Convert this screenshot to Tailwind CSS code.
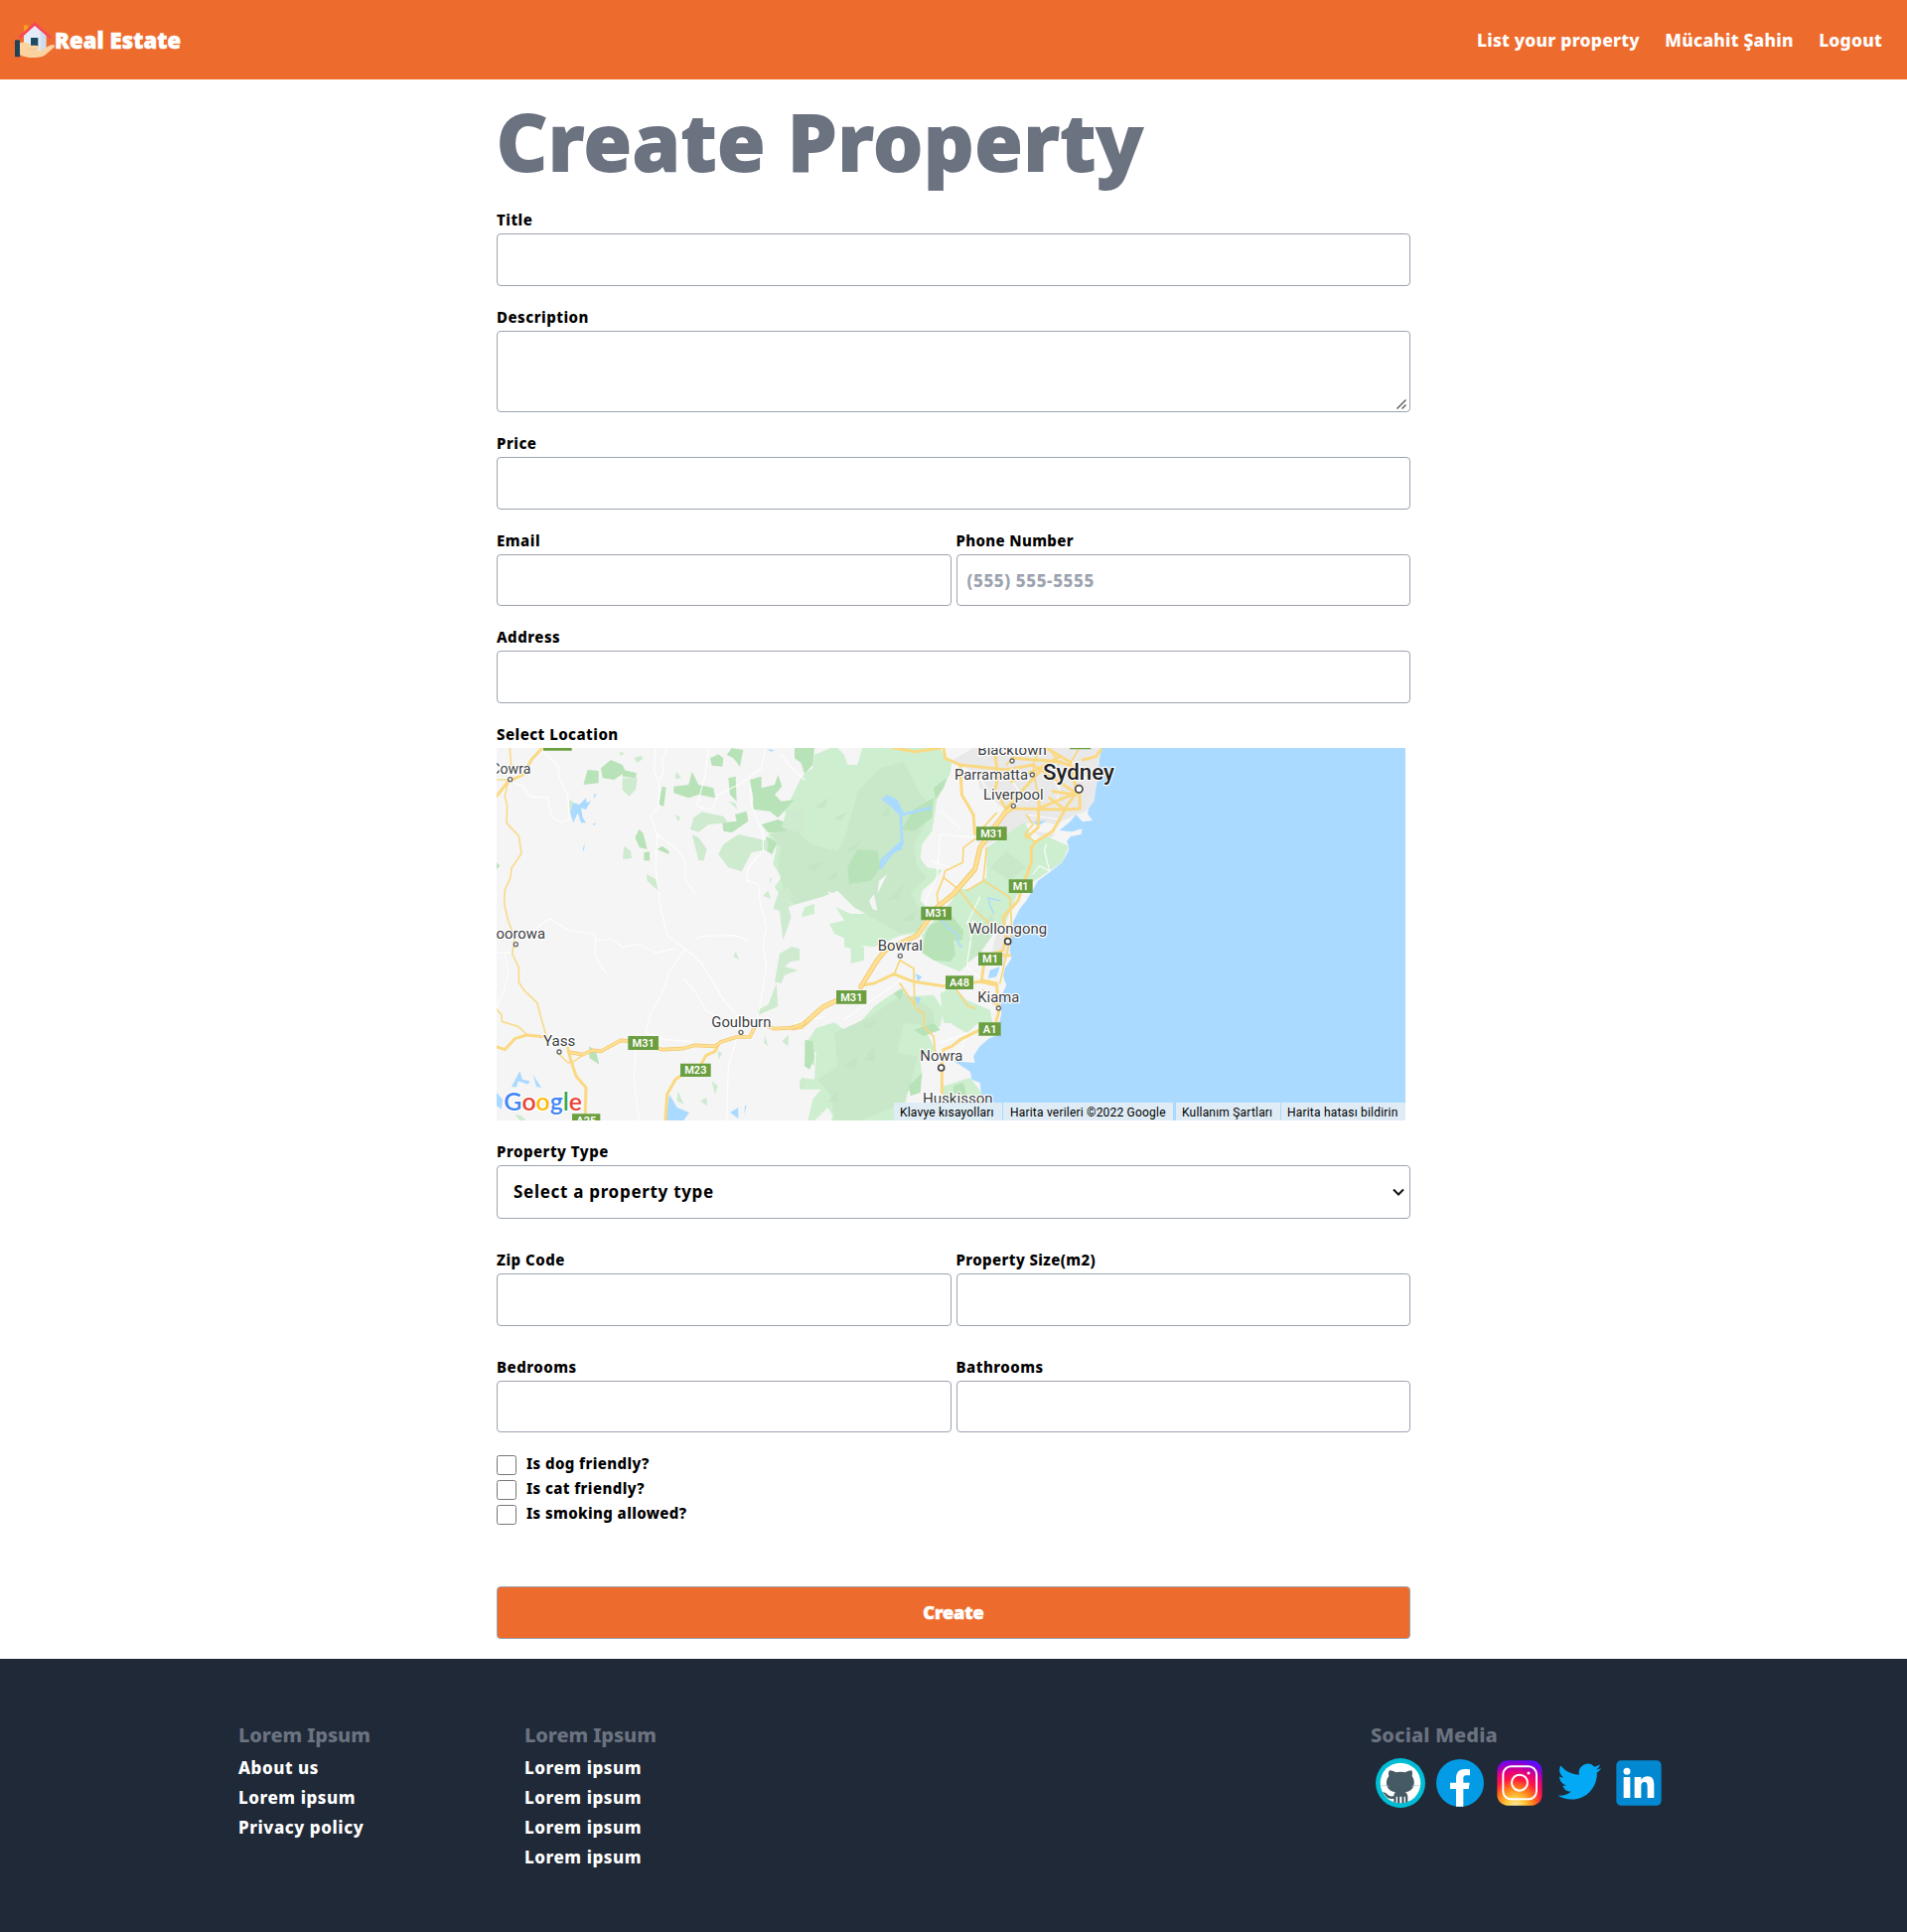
<!DOCTYPE html>
<html lang="en">
<head>
<meta charset="utf-8">
<title>Real Estate - Create Property</title>
<script src="https://cdn.jsdelivr.net/npm/@tailwindcss/browser@4"></script>
</head>
<body class="bg-white text-black font-['Noto_Sans',sans-serif] font-extrabold">

<header class="flex h-20 items-center justify-between bg-[#ed6c2d] pl-[15px] pr-[25px] text-white">
  <a class="flex items-center">
    <svg class="h-[37px] w-10" viewBox="45 65 120 111">
      <rect x="72" y="75" width="13" height="22" fill="#f9a01b"/>
      <path d="M72 106 105 76l34 30v46H72z" fill="#e3edf8"/>
      <path d="M122 90l17 16v46h-17z" fill="#cfdeee"/>
      <path d="M58 113 105 71l48 42" fill="none" stroke="#f8475a" stroke-width="8" stroke-linejoin="round"/>
      <rect x="93" y="113" width="22" height="27" fill="#1f4a63"/>
      <path d="M60 128c14-4 26 0 34 8h16c10 1 10 13 0 14l-16 1h26c10-1 26-13 34-16 8-3 14 1 9 7l-28 24c-7 4-14 5-22 6-18 3-38 1-53-8z" fill="#fbd3a0"/>
      <path d="M85 148h28" stroke="#f0bb80" stroke-width="2"/>
      <rect x="45" y="120" width="15" height="51" rx="2" fill="#1f4257"/>
    </svg>
    <span class="text-[22px] font-black leading-8 tracking-[0.1px] [-webkit-text-stroke:0.6px_#fff]">Real Estate</span>
  </a>
  <nav class="flex gap-[25.5px] pb-px text-[17.5px] leading-6 tracking-[0.22px]">
    <a>List your property</a><a>Mücahit Şahin</a><a>Logout</a>
  </nav>
</header>

<main class="mx-auto w-[920px]">
  <h1 class="h-[129px] pt-[7px] text-[79px] leading-[110px] tracking-[1.1px] text-[#6b7280] [-webkit-text-stroke:2px_#6b7280] [stroke-linejoin:round]">Create Property</h1>

  <form class="text-[15px] leading-6 tracking-[0.5px]">
    <label class="block h-[26px]">Title</label>
    <input class="block h-[53px] w-full rounded border border-[#9ca3af]">

    <label class="mt-[19px] block h-[26px]">Description</label>
    <div class="relative">
      <textarea class="block h-[82px] w-full resize-none rounded border border-[#9ca3af]"></textarea>
      <svg class="absolute bottom-[3px] right-[4px] size-[10px]" viewBox="0 0 10 10" stroke="#555" stroke-width="1.4" fill="none"><path d="M.5 9.500 9.500.5M5.500 9.500 9.500 5.500"/></svg>
    </div>

    <label class="mt-[19px] block h-[26px]">Price</label>
    <input class="block h-[53px] w-full rounded border border-[#9ca3af]">

    <div class="mt-[19px] grid grid-cols-2 gap-[5px]">
      <div><label class="block h-[26px]">Email</label><input class="block h-[52px] w-full rounded border border-[#9ca3af]"></div>
      <div><label class="block h-[26px] tracking-[0.35px]">Phone Number</label><input placeholder="(555) 555-5555" class="block h-[52px] w-full rounded border border-[#9ca3af] px-2.5 text-[17px] tracking-[0.6px] placeholder:text-[#9ca3af]"></div>
    </div>

    <label class="mt-[19px] block h-[26px]">Address</label>
    <input class="block h-[53px] w-full rounded border border-[#9ca3af]">

    <label class="mt-[19px] block h-[26px] tracking-[0.48px]">Select Location</label>
    <div class="relative h-[375px] w-[915px] overflow-hidden">
      <svg class="block h-full w-full font-normal tracking-normal" viewBox="0 0 2745 1125" fill="none" font-family="Roboto, sans-serif" stroke-linejoin="round" stroke-linecap="round">
        <rect width="2745" height="1125" fill="#aadaff"/>

        <!-- mainland, coast and eastern parks -->
        <g transform="translate(900 -39)">
          <path fill="#f5f5f5" d="M-900 39H925L918 100 912 150 905 185 890 215 885 238 900 258 870 262 850 240 832 262 800 288 838 292 868 283 866 300 834 306 822 320 829 338 826 352 808 385 770 415 735 440 718 470 700 500 680 525 662 560 655 600 650 650 655 675 635 705 630 730 640 755 628 780 622 810 625 840 618 870 608 908 588 916 560 940 540 970 545 990 500 990 530 1010 535 1040 560 1050 567 1110V1164H-900z"/>
          <path fill="#e9e9e9" d="M540 39H925L905 200 880 232 850 240 790 270 740 262 690 270 640 300 580 332 545 320 640 225 600 200 560 160 545 110 470 80zM610 600 650 580 650 650 630 700 590 680zM720 290 790 300 760 320z"/>
          <path fill="#ceeed0" d="M110 39H440L455 70 475 85 470 115 430 195 415 290 385 330 380 372 400 400 445 408 420 440 385 470 380 500 400 520 390 595 320 605 240 640 200 635 120 600 105 570 150 560 190 580 220 540 180 520 130 470 80 490 70 480 20 490 0 512-25 522-40 490-60 460-40 430-65 390-55 340-80 300-15 265-30 230 20 130 38 110 55 100 60 60z"/>
          <path fill="#c8e8c9" d="M260 100 330 80 380 180 410 210 390 280 360 330 370 400 400 430 350 480 390 540 380 590 320 600 250 560 180 520 130 470 80 490 0 512-30 480-50 400-40 340-70 300-20 265 50 330 130 350 155 300 175 230 190 170z"/>
          <path fill="#b8e2b8" d="M0 39H60L55 90 30 118 20 85 0 70zM190 345 250 350 260 400 230 440 165 450 160 400zM360 225 420 190 415 250 360 290 325 285zM420 160 460 130 450 160 425 195z"/>
          <path fill="#f5f5f5" d="M130 39 205 39 190 90 160 90 150 60zM225 500 240 480 250 530 235 525zM100 470 150 500 170 540 120 520zM255 440 280 420 250 480z"/>
          <path fill="#ceeed0" d="M580 340 640 300 695 262 720 320 760 305 828 335 808 385 718 445 670 485 640 560 610 590 570 640 500 715 440 690 385 660 385 600 400 580 460 520 500 465 530 465 580 430z"/>
          <path fill="#b8e2b8" d="M395 600 410 575 470 540 510 590 505 640 470 685 420 680 385 655z"/>
          <path fill="#c8e8c9" d="M540 600 600 540 600 600 560 660 520 690 500 640zM590 400 640 350 700 400 650 440z"/>
          <path fill="#ceeed0" d="M65 885 120 868 150 890 200 865 240 820 320 765 345 790 420 785 450 830 440 880 400 900 425 950 380 985 385 1035 340 1080 330 1164H110L115 1150 100 1125 60 1164H40L55 1100 80 1070 15 1070 20 1035 60 1040 65 960 35 930zM440 780 480 760 520 800 590 830 600 875 555 870 520 900 470 870 450 870zM450 1060 530 1035 565 1080 567 1164H440zM-20 790-30 775M30 930 60 920 60 1000 35 980z"/>
          <path fill="#c8e8c9" d="M120 900 230 850 330 780 420 830 420 880 330 870 310 960 370 970 350 1060 330 1110 200 1164H120L110 1090 70 1040 130 1000z"/>
          <path fill="#b8e2b8" d="M345 1060 385 1020 380 1080 350 1090zM360 890 420 870 440 890 390 910zM480 1060 510 1050 520 1090 480 1080zM300 780 330 765 320 800zM32 920 55 925 60 975 45 1010 30 1000z"/>
          <path fill="#ceeed0" d="M30 520 60 510 60 540 20 550zM125 520 170 540 220 540 235 580 180 590 150 560zM150 600 200 610 190 650 150 640zM170 620 210 640 210 680 170 690zM480 620 540 620 520 700 490 700z"/>
          <path fill="#bfe3c1" opacity=".6" d="M120 250l40-18-20 26zM60 220l40-30-8 30zM150 350l50-30-18 28zM30 400l60-20-30 30zM90 440l40-30-6 24zM260 240l30-30-6 36zM280 500l50-50-14 42zM320 560l50-30-14 30zM150 1000l40-30-6 36zM210 980l30-44 4 50zM200 880l50-20-20 28zM100 1110l30-40 2 36z"/>
          <path stroke="#aadaff" stroke-width="8" d="M275 195 320 230 325 330 290 360 262 400M325 240 410 220M290 205 280 190"/><path stroke="#aadaff" stroke-width="5" d="M440 550 460 580 490 600 495 630 505 640"/>
          <path fill="#aadaff" d="M262 195 280 180 310 195 330 235 360 235 320 245 290 215zM320 320 325 345 280 362 255 405 260 375zM590 710 620 700 610 730 585 735zM365 720 385 730 372 745zM362 790 382 795 372 815zM480 985 545 990 535 1020 505 1000zM720 262 760 258 735 275z"/>
          <path stroke="#aadaff" stroke-width="4" d="M620 500 585 492 590 515 602 538"/>
          <!-- minor roads -->
          <g stroke="#fff" stroke-width="3.500" opacity=".85"><path d="M390 600 395 500 430 430 440 300 550 310M440 230 500 280M560 490 520 570M720 420 740 395 770 410 755 350 760 330M410 380 470 400M0 870 90 850M150 860 220 810 320 740M440 930 520 900 500 960M540 560 520 700 570 740M560 130 610 210M760 100 800 160 790 210M700 240 800 255M840 80 880 130M650 130 700 200"/></g>
          <!-- highways -->
          <g stroke="#f9d67a" stroke-width="5">
            <path d="M550 310 510 340 508 385 455 410 450 430 500 470 545 530 590 570M450 430 430 480 435 520M520 470 570 440 650 490 655 560M580 340 570 440M318 680 300 725M318 680 360 705 362 810M318 750 372 830 390 840 390 880 420 910 425 960M490 770 525 820 545 825M570 770 600 810 620 820M655 560 655 600 620 750M560 290 610 235M700 240 720 270 695 300 730 325M610 39V110M680 39 640 90M770 39 800 90M740 39 720 90 740 220M860 39 830 90 850 150"/>
          </g>
          <g stroke="#fad982" stroke-width="9">
            <path d="M300 39 365 50 440 39M450 39 455 70 500 90 640 105 720 90 850 175 815 225 660 222M500 90 505 180 540 240 545 300M605 60 615 120 605 170 640 225M660 70 800 80 850 100M655 140 740 100 800 65M860 170 862 222 820 225M760 39 830 80 850 160M870 75 910 65 925 45M715 340 725 325 780 290 820 220M740 170 735 280 700 310M770 190 810 220M640 220 740 110M740 220 850 175M780 170 850 180"/>
            <path d="M715 340 715 385 695 440 675 500 630 550 640 600 630 650 575 670 565 740 610 750 618 830 608 870 550 895 500 920 475 940 450 950 445 1000 445 1080"/>
            <path d="M205 755 240 750 300 722 360 745 450 758 560 745 610 755M605 665 650 665"/>
          </g>
          <g stroke="#f2c76c" stroke-width="15"><path d="M-5 884 20 880 85 822 130 800M200 760 250 680 275 650 370 605 430 520 480 480 545 405 560 340 635 235 655 220"/></g>
          <g stroke="#ffe093" stroke-width="10"><path d="M-5 884 20 880 85 822 130 800M200 760 250 680 275 650 370 605 430 520 480 480 545 405 560 340 635 235 655 220"/></g>
        </g>

        <!-- western plains -->
        <g transform="translate(-30 -39)">
          <path fill="#b8e2b8" d="M305 105 338 108 338 145 292 150zM345 100 375 75 410 90 420 110 385 135 350 130zM412 105 453 115 450 130 410 125zM530 155 542 158 535 215 520 210zM565 155 610 150 620 110 640 150 685 160 690 190 640 180 610 190 565 175zM675 70 700 58 715 70 712 95 680 92zM725 60 740 39 775 45 765 95 745 70zM730 130 752 125 755 200 735 180zM795 135 830 125 830 160 870 150 880 120 892 155 870 180 890 200 930 195 880 250 855 230 805 225 805 190zM830 270 880 255 915 270 900 290 850 295zM712 265 755 260 750 240 785 230 790 260 740 295 715 290zM845 305 877 325 862 360 845 350zM448 310 460 285 472 295 485 345 462 340zM475 355 492 352 492 380 475 378zM515 345 530 335 550 350 550 360zM30 385 40 395 30 405zM310 940 330 955 340 995 310 975z"/>
          <path fill="#ceeacf" d="M410 130 455 130 450 165 430 185 410 165zM445 70 465 62 472 72 455 83zM400 50 418 55 405 62zM572 110 588 130 570 132zM570 240 585 248 578 262zM625 250 650 232 715 245 730 265 670 270 640 293 615 285zM620 300 640 310 665 345 655 380 640 378zM715 330 760 300 850 320 850 345 800 355 770 412 730 400 700 360zM411 375 415 335 435 350 438 372zM483 420 510 435 523 475 485 440zM752 655 762 678 745 668zM885 660 920 640 945 645 945 680 915 685 900 700 940 710 900 725 890 750 870 745zM875 750 880 820 820 845 818 830 850 815zM840 905 850 940 838 930zM912 905 910 940 892 925zM698 955 712 960 700 980zM578 1075 595 1115 575 1105zM680 1045 698 1060 690 1085zM645 1105 665 1095 665 1120zM85 1145 105 1150 120 1164 100 1164zM945 1045 960 1040 960 1070 945 1065zM250 195 265 205 250 235zM865 525 885 530 895 620 920 550 905 500 930 490 910 460 880 480zM835 485 850 470 858 495zM855 435 862 430 855 450zM730 200 750 205 758 225zM905 230 960 220 960 300 890 280z"/>
          <path fill="#aadaff" d="M252 235 262 205 280 210 300 190 302 205 315 198 300 225 285 220 290 250 300 265 285 265 275 235 262 265zM323 180 331 178 325 192zM320 267 333 268 323 272zM296 328 294 350 290 345zM100 1015 108 1040 130 1045 125 1055 95 1045 90 1063 75 1063zM140 1025 165 1065 150 1062zM30 1080 48 1100 45 1130 30 1120zM552 1085 575 1125 612 1140 595 1164H540zM735 1140 760 1125 760 1158zM780 1120 785 1118 778 1147zM845 42 870 46 860 50z"/>
          <g stroke="#fff" stroke-width="3.500" opacity=".85">
            <path d="M170 50 215 90 220 130 245 180 250 255 225 265 195 245 185 190 130 185 110 155 85 145M510 39 505 110 520 140 520 215 495 245 515 300 510 400 525 520 545 605 600 645 550 720 530 780 495 840 480 900M545 39 530 80 535 110 520 140M515 300 570 340 600 380 600 435 630 480M155 580 190 555 250 590 325 600 330 618 380 618 410 640 460 632 510 658 570 645M330 618 325 660 340 690 360 720M600 645 650 690 680 740 715 800 760 850M635 615 650 607 750 605 790 620M595 735 630 775 665 835 700 850M795 155 800 210 835 300 835 350 790 400 785 440 820 450 825 500 845 580 835 640 845 700 825 820 810 890M670 39 660 120 635 215 680 225 700 180 760 150 830 100 840 45M890 60 930 110 960 135M480 900 540 920 620 925M755 915 730 1000 725 1164M450 940 445 1040 460 1164M30 657 75 658M55 660 65 720 50 780 30 820"/>
          </g>
          <g stroke="#f8db8c" stroke-width="5">
            <path d="M70 39 75 110M75 135H30M65 140 55 185 62 215 60 265 97 305 105 358 75 402 72 430 55 468 53 510 65 560 85 615 77 660 97 702 97 747 115 773 152 808 180 910M30 828 45 845 46 865 95 880 120 903M220 965 245 990 260 988 300 960"/>
          </g>
          <g stroke="#fad982" stroke-width="9">
            <path d="M165 42 135 75 110 120 65 140 30 185M30 942 55 950 85 917 120 906 180 912M245 945 255 985 270 1030 300 1065 297 1164M540 1164 545 1085 570 1040 600 1020M650 990 662 968 690 955 700 935"/>
          </g>
          <g stroke="#f2c76c" stroke-width="11"><path d="M250 958 290 965 320 952 345 955 405 922 440 925M515 945 530 950 590 947 630 937 690 940 705 928 755 912 795 912 808 885M850 880 870 887 925 884 960 870"/></g>
          <g stroke="#ffe093" stroke-width="7"><path d="M250 958 290 965 320 952 345 955 405 922 440 925M515 945 530 950 590 947 630 937 690 940 705 928 755 912 795 912 808 885M850 880 870 887 925 884 960 870"/></g>
        </g>

        <!-- road shields -->
        <g fill="#6b9f41">
          <path d="M141 0h86v8h-86zM1731 0h64v4h-64zM397 870h92v42h-92zM555 953h92v40h-92zM228 1105h85v20h-85z"/>
          <path d="M1449 238h92v41h-92zM1547 397h72v41h-72zM1282 479h92v41h-92zM1455 617h72v40h-72zM1356 688h84v41h-84zM1026 732h91v41h-91zM1456 829h67v40h-67z"/>
        </g>
        <g fill="#fff" font-weight="600" font-size="33" text-anchor="middle">
          <text x="443" y="903">M31</text><text x="601" y="985">M23</text><text x="271" y="1137">A25</text>
          <text x="1495" y="270">M31</text><text x="1583" y="429">M1</text><text x="1328" y="511">M31</text><text x="1491" y="649">M1</text><text x="1398" y="720">A48</text><text x="1072" y="764">M31</text><text x="1490" y="861">A1</text>
        </g>

        <!-- towns -->
        <g fill="#fff" stroke="#666" stroke-width="4">
          <circle cx="41" cy="95" r="6"/><circle cx="58" cy="593" r="6"/><circle cx="189" cy="918" r="6"/><circle cx="738" cy="859" r="6"/><circle cx="1557" cy="39" r="6"/><circle cx="1618" cy="81" r="6"/><circle cx="1561" cy="175" r="6"/><circle cx="1219" cy="628" r="6"/><circle cx="1516" cy="786" r="6"/>
          <g stroke="#444" stroke-width="5"><circle cx="1759" cy="124" r="11"/><circle cx="1544" cy="584" r="9"/><circle cx="1343" cy="966" r="9"/></g>
        </g>
        <g fill="#3c4043" stroke="#fff" stroke-width="7" paint-order="stroke" font-size="45">
          <text x="-17" y="79" textLength="120" lengthAdjust="spacingAndGlyphs">Cowra</text>
          <text x="-29" y="575" textLength="176" lengthAdjust="spacingAndGlyphs">Boorowa</text>
          <text x="141" y="900" textLength="97" lengthAdjust="spacingAndGlyphs">Yass</text>
          <text x="649" y="842" textLength="180" lengthAdjust="spacingAndGlyphs">Goulburn</text>
          <text x="1453" y="22" textLength="208" lengthAdjust="spacingAndGlyphs">Blacktown</text>
          <text x="1383" y="97" textLength="222" lengthAdjust="spacingAndGlyphs">Parramatta</text>
          <text x="1470" y="157" textLength="182" lengthAdjust="spacingAndGlyphs">Liverpool</text>
          <text x="1650" y="96" font-size="67" font-weight="500" fill="#222" textLength="216" lengthAdjust="spacingAndGlyphs">Sydney</text>
          <text x="1425" y="562" textLength="237" lengthAdjust="spacingAndGlyphs">Wollongong</text>
          <text x="1151" y="611" textLength="136" lengthAdjust="spacingAndGlyphs">Bowral</text>
          <text x="1453" y="769" textLength="126" lengthAdjust="spacingAndGlyphs">Kiama</text>
          <text x="1279" y="945" textLength="129" lengthAdjust="spacingAndGlyphs">Nowra</text>
          <text x="1287" y="1075" textLength="212" lengthAdjust="spacingAndGlyphs">Huskisson</text>
        </g>
        <text x="22" y="1094" font-family="Lato, sans-serif" font-size="74" font-weight="600" textLength="236" lengthAdjust="spacingAndGlyphs" stroke="#fff" stroke-width="8" paint-order="stroke"><tspan fill="#4285f4">G</tspan><tspan fill="#ea4335">o</tspan><tspan fill="#fbbc05">o</tspan><tspan fill="#4285f4">g</tspan><tspan fill="#34a853">l</tspan><tspan fill="#ea4335">e</tspan></text>
      </svg>
      <div class="absolute bottom-0 right-0 flex h-[18px] gap-px font-['Roboto',sans-serif] text-[12px] font-normal leading-[20px] tracking-[0.2px] whitespace-nowrap">
        <span class="w-[109px] bg-[#dfecf6]/95 pl-1.5">Klavye kısayolları</span>
        <span class="mr-0.5 w-[171px] bg-[#dfecf6] pl-[7px]">Harita verileri ©2022 Google</span>
        <span class="w-[105px] bg-[#dfecf6] pl-1.5">Kullanım Şartları</span>
        <span class="w-[125px] bg-[#dfecf6] pl-1.5">Harita hatası bildirin</span>
      </div>
    </div>

    <label class="mt-[19px] block h-[26px]">Property Type</label>
    <div class="relative">
      <select class="block h-[54px] w-full appearance-none rounded border border-[#9ca3af] bg-white px-4 text-[17px] font-bold tracking-[0.7px]"><option>Select a property type</option></select>
      <svg class="absolute right-[6px] top-[23px] h-[9px] w-3" viewBox="0 0 12 9" fill="none" stroke="#111" stroke-width="2"><path d="M1 1.500 6 6.500 11 1.500"/></svg>
    </div>

    <div class="mt-[29px] grid grid-cols-2 gap-[5px]">
      <div><label class="block h-[26px]">Zip Code</label><input class="block h-[53px] w-full rounded border border-[#9ca3af]"></div>
      <div><label class="block h-[26px] tracking-[0.4px]">Property Size(m2)</label><input class="block h-[53px] w-full rounded border border-[#9ca3af]"></div>
    </div>
    <div class="mt-[29px] grid grid-cols-2 gap-[5px]">
      <div><label class="block h-[26px]">Bedrooms</label><input class="block h-[52px] w-full rounded border border-[#9ca3af]"></div>
      <div><label class="block h-[26px]">Bathrooms</label><input class="block h-[52px] w-full rounded border border-[#9ca3af]"></div>
    </div>

    <div class="mt-[23px] flex flex-col gap-[5px] leading-[16px] tracking-[0.4px]">
      <label class="flex h-5 gap-2.5"><input type="checkbox" class="size-5"><span>Is dog friendly?</span></label>
      <label class="flex h-5 gap-2.5"><input type="checkbox" class="size-5"><span>Is cat friendly?</span></label>
      <label class="flex h-5 gap-2.5"><input type="checkbox" class="size-5"><span>Is smoking allowed?</span></label>
    </div>

    <button type="button" class="mt-[62px] block h-[53px] w-full rounded border border-[#9ca3af] bg-[#ed6c2d] pb-0.5 text-[18px] font-black tracking-[0px] text-white [-webkit-text-stroke:0.6px_#fff]">Create</button>
  </form>
</main>

<footer class="mt-5 flex h-[275px] bg-[#1f2937] pl-[240px] pt-[62px] text-[17px] leading-[30px] tracking-[0.55px] text-white">
  <div class="w-[288px]">
    <h2 class="h-[33px] text-[20px] tracking-[-0.1px] text-[#6b7280]">Lorem Ipsum</h2>
    <ul><li>About us</li><li>Lorem ipsum</li><li>Privacy policy</li></ul>
  </div>
  <div class="w-[852px]">
    <h2 class="h-[33px] text-[20px] tracking-[-0.1px] text-[#6b7280]">Lorem Ipsum</h2>
    <ul><li>Lorem ipsum</li><li>Lorem ipsum</li><li>Lorem ipsum</li><li>Lorem ipsum</li></ul>
  </div>
  <div>
    <h2 class="h-[38px] text-[20px] tracking-[0.1px] text-[#6b7280]">Social Media</h2>
    <div class="flex gap-2.5 pl-[5px]">
      <svg class="size-[50px]" viewBox="0 0 150 150">
        <circle cx="75" cy="75" r="75" fill="#00bcd4"/><circle cx="75" cy="75" r="61" fill="#fff"/>
        <path d="M42 37c8 0 14 3 19 6 9-2 20-2 29 0 5-3 11-6 19-6 3 7 2 13 1 17 12 16 8 46-20 49 5 4 7 9 7 15v14l-7 3v-19h-4v20h-7v-20h-6v20h-7v-20h-4v19l-7-3v-10c-14 3-22-2-26-10-2-5-6-6-9-8 10-3 14 4 18 8 5 4 11 4 17 2 0-5 2-9 5-11-28-3-34-32-20-49-2-5-2-11 2-17z" fill="#455a64"/>
        <path d="M16 84c9-2 17-2 25 1M109 85c8-3 16-3 24-1" stroke="#b0bec5" stroke-width="2" fill="none"/>
      </svg>
      <svg class="size-[50px]" viewBox="0 0 150 150">
        <circle cx="75" cy="75" r="72" fill="#039be5"/>
        <path d="M63 146V93H45V74h18V62c0-20 10-29 27-29 8 0 12 1 15 1v18H93c-7 0-8 5-8 10v12h19l-3 19H85v53z" fill="#fff"/>
      </svg>
      <svg class="size-[50px]" viewBox="0 0 150 150">
        <defs>
          <radialGradient id="ig" cx=".4" cy="1.02" r="1.05"><stop offset="0" stop-color="#ffe9a8"/><stop offset=".2" stop-color="#ffc93c"/><stop offset=".4" stop-color="#ff7a1a"/><stop offset=".58" stop-color="#ff1744"/><stop offset=".74" stop-color="#e6007e"/><stop offset=".9" stop-color="#8e00d0"/><stop offset="1" stop-color="#5a10ff"/></radialGradient>
        </defs>
        <rect x="7" y="7" width="136" height="136" rx="32" fill="url(#ig)"/>
        <rect x="25" y="25" width="101" height="99" rx="24" fill="none" stroke="#fff" stroke-width="6"/>
        <circle cx="75" cy="74" r="24" fill="none" stroke="#fff" stroke-width="6"/><circle cx="102" cy="45" r="4.500" fill="#fff"/>
      </svg>
      <svg class="size-[50px]" viewBox="0 0 150 150">
        <path transform="translate(10 5) scale(5.5)" fill="#03a9f4" d="M23.95 4.57a10 10 0 0 1-2.82.78 4.96 4.96 0 0 0 2.16-2.73c-.95.56-2 .96-3.13 1.19a4.92 4.92 0 0 0-8.38 4.48A13.93 13.93 0 0 1 1.64 3.16a4.92 4.92 0 0 0 1.52 6.57 4.9 4.9 0 0 1-2.23-.61v.06c0 2.39 1.7 4.38 3.95 4.83a5 5 0 0 1-2.21.08 4.94 4.94 0 0 0 4.6 3.42A9.87 9.87 0 0 1 0 19.54a13.99 13.99 0 0 0 7.55 2.21c9.05 0 14-7.5 14-13.99 0-.21 0-.42-.02-.63a9.94 9.94 0 0 0 2.42-2.56z"/>
      </svg>
      <svg class="size-[50px]" viewBox="0 0 150 150">
        <rect x="7" y="7" width="136" height="136" rx="14" fill="#0288d1"/>
        <circle cx="39" cy="40" r="10.500" fill="#fff"/><path d="M29 57h20v63H29zM62 57h20v9c4-7 11-11 19-11 15 0 20 10 20 26v39h-20V86c0-9-2-14-9-14-8 0-10 6-10 13v35H62z" fill="#fff"/>
      </svg>
    </div>
  </div>
</footer>
</body>
</html>
